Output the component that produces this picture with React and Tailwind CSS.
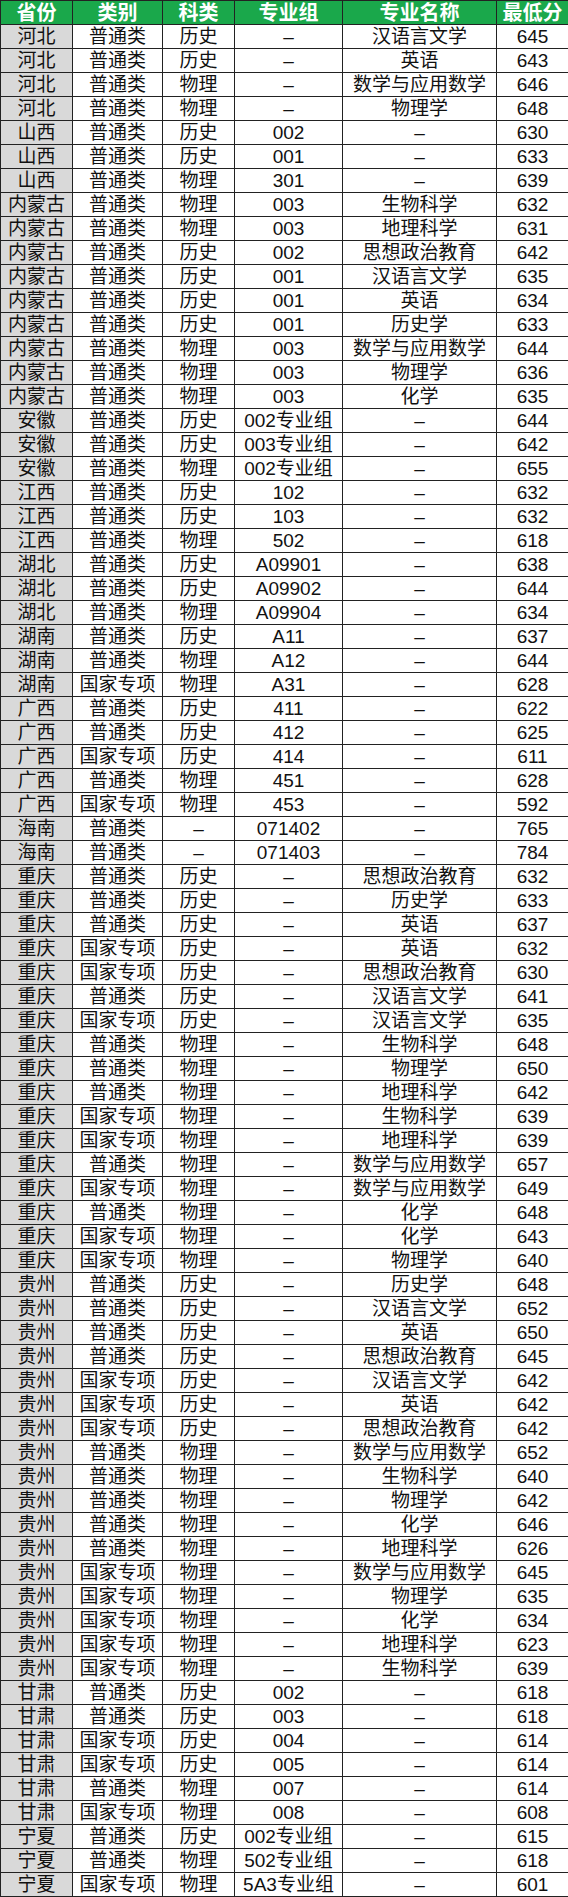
import React from 'react';

const raw = `河北,普通类,历史,–,汉语言文学,645
河北,普通类,历史,–,英语,643
河北,普通类,物理,–,数学与应用数学,646
河北,普通类,物理,–,物理学,648
山西,普通类,历史,002,–,630
山西,普通类,历史,001,–,633
山西,普通类,物理,301,–,639
内蒙古,普通类,物理,003,生物科学,632
内蒙古,普通类,物理,003,地理科学,631
内蒙古,普通类,历史,002,思想政治教育,642
内蒙古,普通类,历史,001,汉语言文学,635
内蒙古,普通类,历史,001,英语,634
内蒙古,普通类,历史,001,历史学,633
内蒙古,普通类,物理,003,数学与应用数学,644
内蒙古,普通类,物理,003,物理学,636
内蒙古,普通类,物理,003,化学,635
安徽,普通类,历史,002专业组,–,644
安徽,普通类,历史,003专业组,–,642
安徽,普通类,物理,002专业组,–,655
江西,普通类,历史,102,–,632
江西,普通类,历史,103,–,632
江西,普通类,物理,502,–,618
湖北,普通类,历史,A09901,–,638
湖北,普通类,历史,A09902,–,644
湖北,普通类,物理,A09904,–,634
湖南,普通类,历史,A11,–,637
湖南,普通类,物理,A12,–,644
湖南,国家专项,物理,A31,–,628
广西,普通类,历史,411,–,622
广西,普通类,历史,412,–,625
广西,国家专项,历史,414,–,611
广西,普通类,物理,451,–,628
广西,国家专项,物理,453,–,592
海南,普通类,–,071402,–,765
海南,普通类,–,071403,–,784
重庆,普通类,历史,–,思想政治教育,632
重庆,普通类,历史,–,历史学,633
重庆,普通类,历史,–,英语,637
重庆,国家专项,历史,–,英语,632
重庆,国家专项,历史,–,思想政治教育,630
重庆,普通类,历史,–,汉语言文学,641
重庆,国家专项,历史,–,汉语言文学,635
重庆,普通类,物理,–,生物科学,648
重庆,普通类,物理,–,物理学,650
重庆,普通类,物理,–,地理科学,642
重庆,国家专项,物理,–,生物科学,639
重庆,国家专项,物理,–,地理科学,639
重庆,普通类,物理,–,数学与应用数学,657
重庆,国家专项,物理,–,数学与应用数学,649
重庆,普通类,物理,–,化学,648
重庆,国家专项,物理,–,化学,643
重庆,国家专项,物理,–,物理学,640
贵州,普通类,历史,–,历史学,648
贵州,普通类,历史,–,汉语言文学,652
贵州,普通类,历史,–,英语,650
贵州,普通类,历史,–,思想政治教育,645
贵州,国家专项,历史,–,汉语言文学,642
贵州,国家专项,历史,–,英语,642
贵州,国家专项,历史,–,思想政治教育,642
贵州,普通类,物理,–,数学与应用数学,652
贵州,普通类,物理,–,生物科学,640
贵州,普通类,物理,–,物理学,642
贵州,普通类,物理,–,化学,646
贵州,普通类,物理,–,地理科学,626
贵州,国家专项,物理,–,数学与应用数学,645
贵州,国家专项,物理,–,物理学,635
贵州,国家专项,物理,–,化学,634
贵州,国家专项,物理,–,地理科学,623
贵州,国家专项,物理,–,生物科学,639
甘肃,普通类,历史,002,–,618
甘肃,普通类,历史,003,–,618
甘肃,国家专项,历史,004,–,614
甘肃,国家专项,历史,005,–,614
甘肃,普通类,物理,007,–,614
甘肃,国家专项,物理,008,–,608
宁夏,普通类,历史,002专业组,–,615
宁夏,普通类,物理,502专业组,–,618
宁夏,国家专项,物理,5A3专业组,–,601`;

const rows = raw.split('\n').map((line) => line.split(','));
const headers = ['省份', '类别', '科类', '专业组', '专业名称', '最低分'];

export default function App() {
  return (
    <div className="w-[568px] bg-white">
      <table
        className="w-[568px] table-fixed border-collapse text-[19px] leading-none text-[#111]"
        style={{ fontFamily: '"Liberation Sans", "Noto Sans CJK SC", sans-serif' }}
      >
        <colgroup>
          <col className="w-[72px]" />
          <col className="w-[90px]" />
          <col className="w-[72px]" />
          <col className="w-[108px]" />
          <col className="w-[154px]" />
          <col className="w-[72px]" />
        </colgroup>
        <thead>
          <tr className="h-[24px] bg-[#1aa84b]">
            {headers.map((h) => (
              <th
                key={h}
                className="border border-[#222] p-0 text-center text-[20px] font-bold text-white"
              >
                {h}
              </th>
            ))}
          </tr>
        </thead>
        <tbody>
          {rows.map((row, i) => (
            <tr key={i} className="h-[24px]">
              {row.map((cell, j) => (
                <td
                  key={j}
                  className={
                    j === 0
                      ? 'border border-[#222] bg-[#d9d9d9] p-0 text-center'
                      : 'border border-[#222] p-0 text-center'
                  }
                >
                  {cell}
                </td>
              ))}
            </tr>
          ))}
        </tbody>
      </table>
    </div>
  );
}
